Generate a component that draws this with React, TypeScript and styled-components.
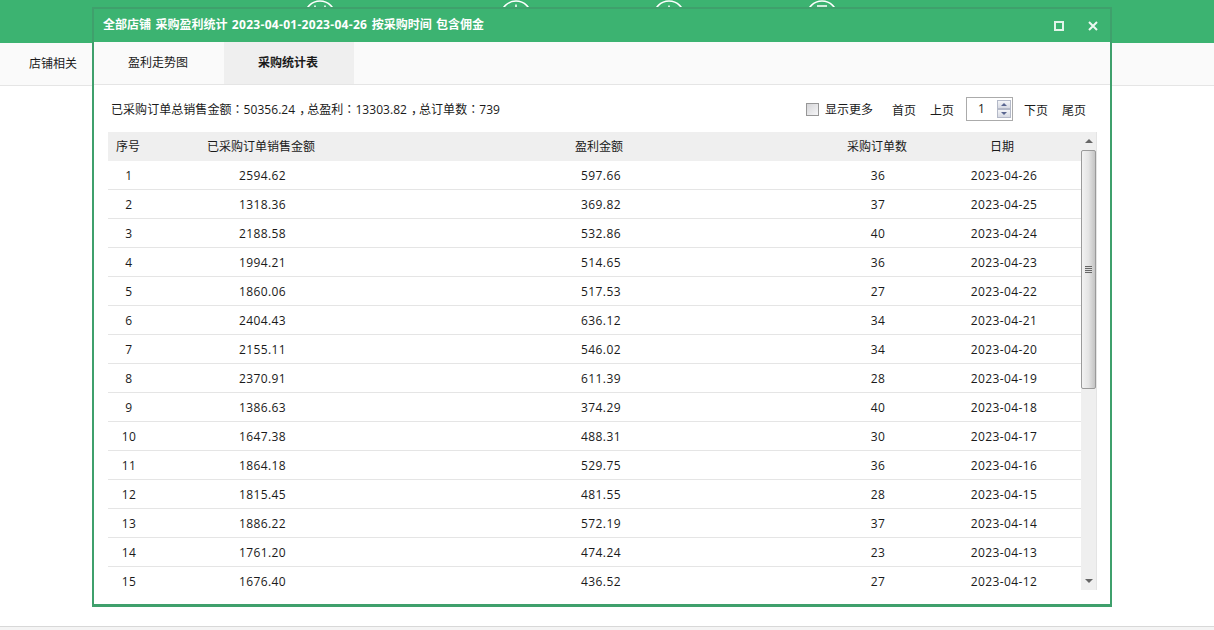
import React from 'react'
import styled, { createGlobalStyle } from 'styled-components';

const FONT = '"Open Sans", "Noto Sans CJK SC", sans-serif';
const GREEN = '#3cb371';

const GlobalStyle = createGlobalStyle`
  html, body {
    margin: 0;
    padding: 0;
    background: #fff;
  }
  body {
    font: 12px/16px ${FONT};
    color: #1a1a1a;
  }
`;

const Page = styled.div`
  position: relative;
  height: 630px;
  overflow: hidden;
  display: flex;
  flex-direction: column;
`;

const TopBar = styled.div`
  height: 43px;
  background: ${GREEN};
  display: flex;
  padding-left: 304px;
`;

const TopIcon = styled.svg<{ gap: number }>`
  width: 32px;
  height: 32px;
  margin-right: ${({ gap }) => gap}px;
  flex: none;
`;

const SubNav = styled.div`
  height: 42px;
  background: #fafafa;
  border-bottom: 1px solid #e5e5e5;
  display: flex;
  align-items: center;
  padding-left: 29px;
`;

const Content = styled.div`
  flex: 1;
`;

const PageFoot = styled.div`
  height: 3px;
  background: #f4f4f4;
  border-top: 1px solid #d8d8d8;
`;

const Dialog = styled.section`
  position: absolute;
  left: 92px;
  top: 7px;
  width: 1020px;
  height: 600px;
  box-sizing: border-box;
  background: #fff;
  border: 2px solid #3fa06c;
  border-bottom-width: 3px;
  display: flex;
  flex-direction: column;
`;

const TitleBar = styled.header`
  height: 33px;
  flex: none;
  background: ${GREEN};
  color: #fff;
  font-weight: 700;
  display: flex;
  align-items: center;
  padding: 0 12px 0 9px;
`;

const Title = styled.h1`
  flex: 1;
  margin: 0;
  font: inherit;
  word-spacing: 1.3px;
  position: relative;
  top: -1px;
`;

const DateRange = styled.span`
  letter-spacing: 0.3px;
`;

const WindowButton = styled.svg`
  width: 10px;
  height: 10px;
  margin-left: 24px;
  flex: none;
`;

const TabRow = styled.nav`
  height: 43px;
  flex: none;
  box-sizing: border-box;
  background: #fafafa;
  border-bottom: 1px solid #e5e5e5;
  display: flex;
`;

const Tab = styled.div<{ active?: boolean }>`
  width: 130px;
  display: flex;
  align-items: center;
  justify-content: center;
  padding-right: 2px;
  box-sizing: border-box;
  background: ${({ active }) => (active ? '#efefef' : 'transparent')};
  font-weight: ${({ active }) => (active ? 700 : 400)};
`;

const Body = styled.div`
  flex: 1;
  min-height: 0;
  padding: 0 13px 0 14px;
  display: flex;
  flex-direction: column;
`;

const Toolbar = styled.div`
  height: 47px;
  flex: none;
  box-sizing: border-box;
  display: flex;
  align-items: center;
  padding: 2px 11px 0 3px;
`;

const Summary = styled.div`
  flex: 1;
  letter-spacing: 0.05px;
`;

// the reference centres the full-width colon and comma in their em box
const Colon = styled.span`
  font-family: "Noto Sans CJK TC", sans-serif;
`;

const Comma = styled.span`
  display: inline-block;
  padding-left: 4px;
  letter-spacing: -4px;
`;

const CheckBox = styled.span`
  width: 11px;
  height: 11px;
  border: 1px solid #979797;
  background: linear-gradient(135deg, #d5d5d8, #f6f6f8);
  margin-right: 6px;
`;

const PagerLink = styled.a<{ gap?: number }>`
  margin-left: ${({ gap = 14 }) => gap}px;
  padding-top: 2px;
  color: #1a1a1a;
`;

const PageInput = styled.div`
  width: 34px;
  height: 22px;
  margin: 0 0 2px 12px;
  border: 1px solid #ababab;
  display: flex;
  align-items: center;
  justify-content: space-between;
  padding-left: 11px;
`;

const Spin = styled.div`
  width: 14px;
  height: 18px;
  margin-right: 1px;
  display: flex;
  flex-direction: column;
  justify-content: space-between;
`;

const SpinButton = styled.span<{ down?: boolean }>`
  height: 8px;
  border: 1px solid #b4b9c8;
  background: linear-gradient(#f4f5f8, #d7dae3);
  display: flex;
  align-items: center;
  justify-content: center;
  &::after {
    content: '';
    border-left: 3px solid transparent;
    border-right: 3px solid transparent;
    ${({ down }) => (down ? 'border-top' : 'border-bottom')}: 3px solid #5a6690;
  }
`;

const TableWrap = styled.div`
  height: 458px;
  display: flex;
`;

const TableClip = styled.div`
  width: 973px;
  overflow: hidden;
`;

const Table = styled.table`
  width: 973px;
  table-layout: fixed;
  border-collapse: collapse;
`;

const HeadCell = styled.th<{ nudge?: number }>`
  height: 29px;
  padding: 0 ${({ nudge = 0 }) => nudge}px 0 0;
  background: #efefef;
  font-weight: 400;
  text-align: center;
`;

const Cell = styled.td<{ shift: number }>`
  height: 26px;
  padding: 2px 0 0 ${({ shift }) => shift}px;
  text-align: center;
  letter-spacing: 0.4px;
  border-bottom: 1px solid #e5e5e5;
`;

const ScrollBar = styled.div`
  width: 15px;
  background: #efefef;
  border-right: 1px solid #e4e4e4;
  display: flex;
  flex-direction: column;
  align-items: center;
`;

const Arrow = styled.span<{ down?: boolean }>`
  height: 18px;
  flex: none;
  display: flex;
  align-items: center;
  justify-content: center;
  &::after {
    content: '';
    border-left: 4px solid transparent;
    border-right: 4px solid transparent;
    ${({ down }) => (down ? 'border-top' : 'border-bottom')}: 4px solid #666;
  }
`;

const Thumb = styled.div`
  width: 15px;
  height: 239px;
  box-sizing: border-box;
  border: 1px solid #9a9a9a;
  border-radius: 2px;
  background: linear-gradient(90deg, #f2f2f2, #e4e4e4 50%, #c4c4c4);
  display: flex;
  align-items: center;
  justify-content: center;
`;

const Grip = styled.span`
  width: 7px;
  height: 7px;
  background: repeating-linear-gradient(#666 0 1px, #ddd 1px 2px);
`;

const Track = styled.div`
  flex: 1;
`;

const ROWS: [string, string, number, string][] = [
  ['2594.62', '597.66', 36, '2023-04-26'],
  ['1318.36', '369.82', 37, '2023-04-25'],
  ['2188.58', '532.86', 40, '2023-04-24'],
  ['1994.21', '514.65', 36, '2023-04-23'],
  ['1860.06', '517.53', 27, '2023-04-22'],
  ['2404.43', '636.12', 34, '2023-04-21'],
  ['2155.11', '546.02', 34, '2023-04-20'],
  ['2370.91', '611.39', 28, '2023-04-19'],
  ['1386.63', '374.29', 40, '2023-04-18'],
  ['1647.38', '488.31', 30, '2023-04-17'],
  ['1864.18', '529.75', 36, '2023-04-16'],
  ['1815.45', '481.55', 28, '2023-04-15'],
  ['1886.22', '572.19', 37, '2023-04-14'],
  ['1761.20', '474.24', 23, '2023-04-13'],
  ['1676.40', '436.52', 27, '2023-04-12'],
];

const HeadIcon = ({ gap, children }: { gap: number; children: React.ReactNode }) => (
  <TopIcon gap={gap} viewBox="0 0 32 32" fill="none" stroke="#fff" strokeWidth="1.5">
    <circle cx="16" cy="16" r="15" />
    {children}
  </TopIcon>
);

const App = () => (
  <Page>
    <GlobalStyle />
    <TopBar>
      <HeadIcon gap={164}>
        <path d="M11 5.5v2M21 5.5v2" />
      </HeadIcon>
      <HeadIcon gap={121}>
        <path d="M16 4.5v3" />
      </HeadIcon>
      <HeadIcon gap={121}>
        <path d="M16 5.5v2" />
      </HeadIcon>
      <HeadIcon gap={0}>
        <path d="M11 6h10" />
      </HeadIcon>
    </TopBar>
    <SubNav>店铺相关</SubNav>
    <Content />
    <PageFoot />

    <Dialog>
      <TitleBar>
        <Title>
          全部店铺 采购盈利统计 <DateRange>2023-04-01-2023-04-26</DateRange> 按采购时间 包含佣金
        </Title>
        <WindowButton viewBox="0 0 10 10" fill="none" stroke="#fff" strokeOpacity="0.85" strokeWidth="2">
          <rect x="1" y="1" width="8" height="8" />
        </WindowButton>
        <WindowButton viewBox="0 0 10 10" fill="none" stroke="#fff" strokeOpacity="0.9" strokeWidth="2">
          <path d="M1 1l8 8M9 1l-8 8" />
        </WindowButton>
      </TitleBar>
      <TabRow>
        <Tab>盈利走势图</Tab>
        <Tab active>采购统计表</Tab>
      </TabRow>
      <Body>
        <Toolbar>
          <Summary>
            已采购订单总销售金额<Colon>：</Colon>50356.24<Comma>，</Comma>总盈利<Colon>：</Colon>13303.82<Comma>，</Comma>总订单数<Colon>：</Colon>739
          </Summary>
          <CheckBox />
          <span>显示更多</span>
          <PagerLink gap={19}>首页</PagerLink>
          <PagerLink>上页</PagerLink>
          <PageInput>
            1
            <Spin>
              <SpinButton />
              <SpinButton down />
            </Spin>
          </PageInput>
          <PagerLink gap={11}>下页</PagerLink>
          <PagerLink>尾页</PagerLink>
        </Toolbar>
        <TableWrap>
          <TableClip>
            <Table>
              <colgroup>
                <col width="40" />
                <col width="226" />
                <col width="450" />
                <col width="106" />
                <col width="148" />
                <col width="3" />
              </colgroup>
              <thead>
                <tr>
                  <HeadCell>序号</HeadCell>
                  <HeadCell>已采购订单销售金额</HeadCell>
                  <HeadCell>盈利金额</HeadCell>
                  <HeadCell>采购订单数</HeadCell>
                  <HeadCell nudge={4}>日期</HeadCell>
                  <HeadCell />
                </tr>
              </thead>
              <tbody>
                {ROWS.map((row, i) => (
                  <tr key={row[3]}>
                    <Cell shift={2}>{i + 1}</Cell>
                    <Cell shift={3}>{row[0]}</Cell>
                    <Cell shift={4}>{row[1]}</Cell>
                    <Cell shift={2}>{row[2]}</Cell>
                    <Cell shift={0}>{row[3]}</Cell>
                    <Cell shift={0} />
                  </tr>
                ))}
              </tbody>
            </Table>
          </TableClip>
          <ScrollBar>
            <Arrow />
            <Thumb>
              <Grip />
            </Thumb>
            <Track />
            <Arrow down />
          </ScrollBar>
        </TableWrap>
      </Body>
    </Dialog>
  </Page>
);

export default App
